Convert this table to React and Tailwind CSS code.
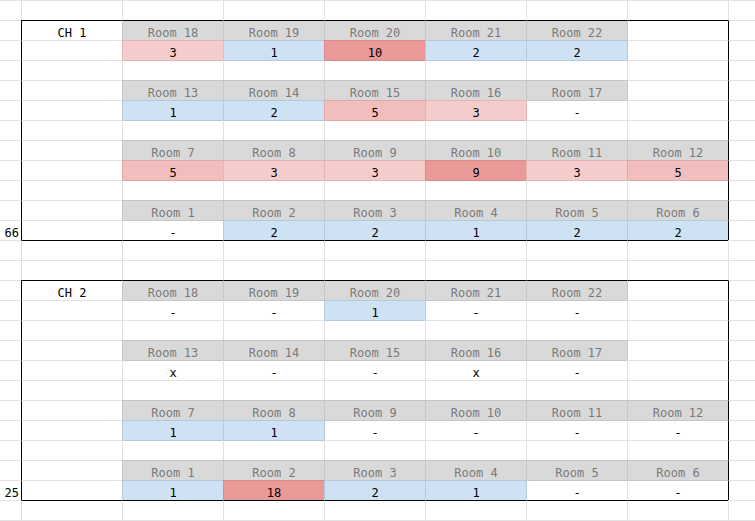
const BT = {
  grid: 'border-t-[#e1e1e1]',
  black: 'border-t-black',
  h: 'border-t-[#c6c6c6]',
  b: 'border-t-[#b4c9de]',
  p1: 'border-t-[#e3b4b4]',
  p2: 'border-t-[#e0a8a8]',
  p3: 'border-t-[#d98a8a]',
};

const BL = {
  grid: 'border-l-[#e1e1e1]',
  black: 'border-l-black',
  h: 'border-l-[#c6c6c6]',
  b: 'border-l-[#b4c9de]',
  p1: 'border-l-[#e3b4b4]',
  p2: 'border-l-[#e0a8a8]',
  p3: 'border-l-[#d98a8a]',
};

const BG = {
  h: 'bg-[#d9d9d9] text-[#7a7a7a]',
  b: 'bg-[#cfe2f3] text-black',
  p1: 'bg-[#f4cccc] text-black',
  p2: 'bg-[#f2bdbd] text-black',
  p3: 'bg-[#ea9999] text-black',
};

function tone(v) {
  if (v === '1' || v === '2') return 'b';
  if (v === '3') return 'p1';
  if (v === '5') return 'p2';
  if (v === '9' || v === '10' || v === '18') return 'p3';
  return null;
}

const rooms = (from, to) => {
  const out = [];
  for (let n = from; n <= to; n++) out.push(`Room ${n}`);
  return out;
};

const channels = [
  {
    label: 'CH 1',
    total: '66',
    groups: [
      [rooms(18, 22), ['3', '1', '10', '2', '2']],
      [rooms(13, 17), ['1', '2', '5', '3', '-']],
      [rooms(7, 12), ['5', '3', '3', '9', '3', '5']],
      [rooms(1, 6), ['-', '2', '2', '1', '2', '2']],
    ],
  },
  {
    label: 'CH 2',
    total: '25',
    groups: [
      [rooms(18, 22), ['-', '-', '1', '-', '-']],
      [rooms(13, 17), ['x', '-', '-', 'x', '-']],
      [rooms(7, 12), ['1', '1', '-', '-', '-', '-']],
      [rooms(1, 6), ['1', '18', '2', '1', '-', '-']],
    ],
  },
];

const empty = () => Array.from({ length: 9 }, () => ({ v: '', t: null }));

// build sheet rows: each row is 9 cells (A..I)
function buildSheet() {
  const rows = [empty()];
  const boxes = [];
  channels.forEach((ch, ci) => {
    const start = rows.length;
    ch.groups.forEach(([heads, vals], gi) => {
      const hr = empty();
      const vr = empty();
      if (gi === 0) hr[1] = { v: ch.label, t: null };
      heads.forEach((h, i) => (hr[2 + i] = { v: h, t: 'h' }));
      vals.forEach((v, i) => (vr[2 + i] = { v, t: tone(v) }));
      if (gi === 3) vr[0] = { v: ch.total, t: null };
      rows.push(hr, vr);
      if (gi < 3) rows.push(empty());
    });
    boxes.push([start, rows.length - 1]);
    if (ci === 0) rows.push(empty(), empty());
  });
  rows.push(empty(), empty());
  return { rows, boxes };
}

const { rows, boxes } = buildSheet();

const inBox = (r) => boxes.some(([a, b]) => r >= a && r <= b);
const boxTop = (r) => boxes.some(([a, b]) => r === a || r === b + 1);

export default function App() {
  return (
    <div className="w-[755px] h-[521px] overflow-hidden bg-white font-['DejaVu_Sans_Mono',monospace] text-[12px]">
      <div className="grid grid-cols-[21px_repeat(7,101px)_1fr]">
        {rows.map((row, r) =>
          row.map((cell, c) => {
            const above = r > 0 ? rows[r - 1][c] : null;
            const left = c > 0 ? row[c - 1] : null;

            let top = cell.t || (above && above.t) || 'grid';
            if (c >= 1 && c <= 7 && boxTop(r)) top = 'black';

            let lft = cell.t || (left && left.t) || 'grid';
            if ((c === 1 || c === 8) && inBox(r)) lft = 'black';

            const align = c === 0 ? 'justify-end pr-[2px]' : 'justify-center';
            return (
              <div
                key={`${r}-${c}`}
                className={`h-5 flex items-end leading-[14px] border-t ${BT[top]} ${
                  c === 0 ? 'border-l-0' : `border-l ${BL[lft]}`
                } ${align} ${cell.t ? BG[cell.t] : 'text-black'}`}
              >
                {cell.v}
              </div>
            );
          })
        )}
      </div>
    </div>
  );
}
